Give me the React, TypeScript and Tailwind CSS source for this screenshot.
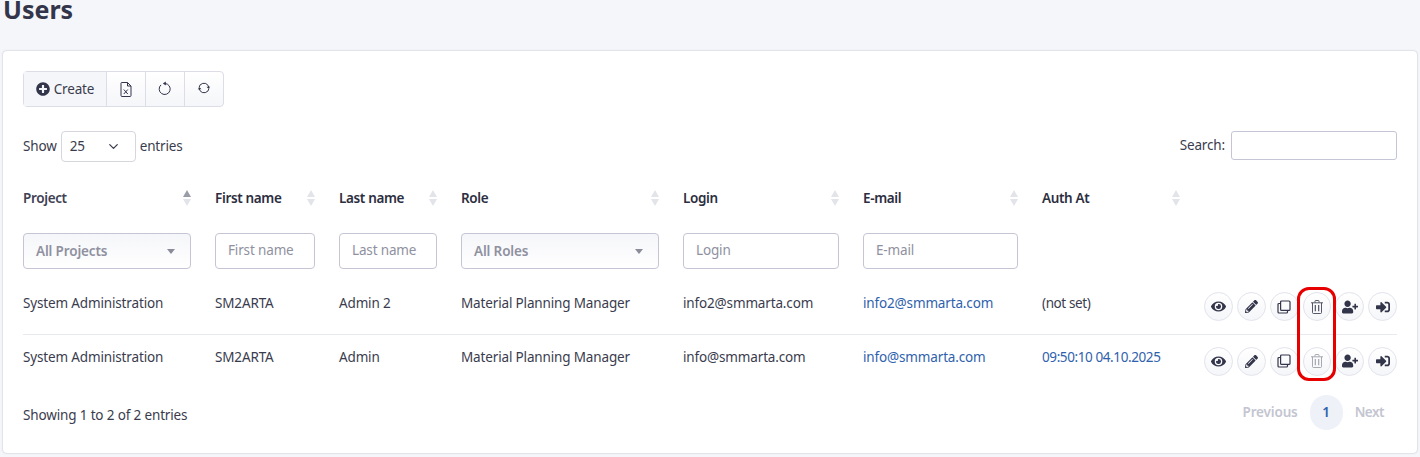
import { FaEye, FaPencilAlt, FaUserPlus, FaSignInAlt, FaPlusCircle } from "react-icons/fa";
import { ChevronDown } from "lucide-react";

interface Row {
  project: string;
  first: string;
  last: string;
  role: string;
  login: string;
  email: string;
  auth: string;
  authLink: boolean;
}

const rows: Row[] = [
  { project: "System Administration", first: "SM2ARTA", last: "Admin 2", role: "Material Planning Manager", login: "info2@smmarta.com", email: "info2@smmarta.com", auth: "(not set)", authLink: false },
  { project: "System Administration", first: "SM2ARTA", last: "Admin", role: "Material Planning Manager", login: "info@smmarta.com", email: "info@smmarta.com", auth: "09:50:10 04.10.2025", authLink: true },
];

function SortHead({ label, width, active }: { label: string; width: string; active?: boolean }) {
  return (
    <th className={`${width} h-[55px] p-0 pr-[23px] text-left align-middle font-semibold tracking-[-0.35px] ${active ? "text-[#3f4254]" : "text-[#2c2e40]"}`}>
      <div className="flex items-center justify-between pr-[1px]">
        <span className="pt-[2px]">{label}</span>
        <span className="flex flex-col gap-[2px]">
          <span className={`h-0 w-0 border-x-[4px] border-b-[7px] border-x-transparent ${active ? "border-b-[#9a9ca8]" : "border-b-[#e3e4e9]"}`} />
          <span className="h-0 w-0 border-x-[4px] border-t-[7px] border-x-transparent border-t-[#e3e4e9]" />
        </span>
      </div>
    </th>
  );
}

function FilterInput({ placeholder, width }: { placeholder: string; width: string }) {
  return (
    <input
      placeholder={placeholder}
      className={`${width} block h-[36px] rounded-[4px] border border-[#c5c5d6] bg-white px-3 pb-[3px] outline-none placeholder:text-[#8f91a0]`}
    />
  );
}

function FilterSelect({ label, width }: { label: string; width: string }) {
  return (
    <div className={`${width} flex h-[36px] items-center justify-between rounded-[4px] border border-[#c5c5d6] bg-gradient-to-b from-[#f5f6f9] to-white pl-3 pr-[15px] font-semibold text-[#8f91a0]`}>
      <span className="pt-[1px]">{label}</span>
      <span className="h-0 w-0 border-x-[4px] border-t-[5px] border-x-transparent border-t-[#8a8c99]" />
    </div>
  );
}

function ActionButton({ children }: { children: React.ReactNode }) {
  return (
    <button className="flex h-[29px] w-[29px] items-center justify-center rounded-full border border-[#e3e4ec] bg-gradient-to-b from-white to-[#f5f6f9] text-[14px] text-[#33354a]">
      {children}
    </button>
  );
}

function ExcelIcon() {
  return (
    <svg width="12" height="15" viewBox="0 0 12 15" fill="none" stroke="#33354a" strokeWidth="1">
      <path d="M1.500 .5h6l3.500 3.500v9.500a1 1 0 0 1-1 1h-8a1 1 0 0 1-1-1v-12.500a1 1 0 0 1 .5-.5z" />
      <path d="M7.500 .5v3.500h3.500" />
      <path d="M3.800 7.500l4 4.500M7.800 7.500l-4 4.500" />
    </svg>
  );
}

function UndoIcon() {
  return (
    <svg width="14" height="14" viewBox="0 0 14 14" fill="none" stroke="#33354a" strokeWidth="1">
      <path d="M3 3.900a5.500 5.500 0 1 0 4-1.400" />
      <path d="M4.800 2.500 7.800.4v4.200z" fill="#33354a" stroke="none" />
    </svg>
  );
}

function SyncIcon() {
  return (
    <svg width="14" height="14" viewBox="0 0 14 14" fill="none" stroke="#33354a" strokeWidth="1">
      <path d="M2 6.500a5 5 0 0 1 9-2.200l.8 1.700" />
      <path d="M12 7.500a5 5 0 0 1-9 2.200L2.200 8" />
      <path d="M9.500 5.700h3.800l-1.900 2zM.7 8.300h3.800l-1.900-2z" fill="#33354a" stroke="none" />
    </svg>
  );
}

function CopyIcon() {
  return (
    <svg width="14" height="14" viewBox="0 0 14 14" fill="none" stroke="#33354a" strokeWidth="1.200">
      <rect x="3.600" y="1" width="9.400" height="9.400" rx="1" />
      <path d="M3.600 3.500H2a1 1 0 0 0-1 1V12a1 1 0 0 0 1 1h7.500a1 1 0 0 0 1-1v-1.600" />
    </svg>
  );
}

function TrashIcon({ faded }: { faded: boolean }) {
  return (
    <svg width="12" height="14" viewBox="0 0 12 14" fill="none" stroke="#44465a" strokeWidth="0.900" className={faded ? "opacity-50" : ""}>
      <path d="M0 2.800h12M4 2.500V1.200a.7.7 0 0 1 .7-.7h2.600a.7.7 0 0 1 .7.7v1.300" />
      <path d="M1.500 2.800v9.700a1 1 0 0 0 1 1h7a1 1 0 0 0 1-1V2.800" />
      <path d="M4.300 5v6.200M7.700 5v6.200" strokeWidth="1.100" />
    </svg>
  );
}

export default function App() {
  return (
    <div className="min-h-[457px] overflow-hidden bg-[#f5f6f9] text-[13.5px] tracking-[-0.15px] text-[#3a3c4e]" style={{ fontFamily: '"Noto Sans", sans-serif' }}>
      <h1 className="h-[51px] pl-[3px] text-[25px] leading-[18px] font-bold tracking-normal text-[#33354a]">Users</h1>

      <div className="mx-[3px] h-[402px] rounded-[4px] bg-white px-[20px] pt-[20px] shadow-[0_0_2px_rgba(60,64,90,0.35)]">
        <div className="flex h-[36px] w-fit rounded-[4px] border border-[#dcdde6] bg-gradient-to-b from-white to-[#f5f6f9]">
          <button className="flex w-[83px] items-center justify-center gap-[4px] border-r border-[#dcdde6] bg-[#f5f6f9]">
            <FaPlusCircle className="text-[14px] text-[#33354a]" />
            <span>Create</span>
          </button>
          <button className="flex w-[39px] items-center justify-center border-r border-[#dcdde6]">
            <ExcelIcon />
          </button>
          <button className="flex w-[39px] items-center justify-center border-r border-[#dcdde6] pb-[2px]">
            <UndoIcon />
          </button>
          <button className="flex w-[38px] items-center justify-center pb-[2px]">
            <SyncIcon />
          </button>
        </div>

        <div className="mt-[24px] flex h-[31px] items-start justify-between">
          <div className="flex items-center gap-[4px]">
            <span>Show</span>
            <div className="flex h-[31px] w-[75px] items-center justify-between rounded-[4px] border border-[#d5d6de] pl-[8px] pr-[14px]">
              <span>25</span>
              <ChevronDown size={15} strokeWidth={2} />
            </div>
            <span>entries</span>
          </div>
          <div className="flex items-center gap-[6px]">
            <span>Search:</span>
            <div className="h-[29px] w-[166px] rounded-[3px] border border-[#c5c5d6] bg-white" />
          </div>
        </div>

        <div className="relative mt-[8px]">
          <table className="w-full table-fixed border-collapse">
            <thead>
              <tr>
                <SortHead label="Project" width="w-[192px]" active />
                <SortHead label="First name" width="w-[124px]" />
                <SortHead label="Last name" width="w-[122px]" />
                <SortHead label="Role" width="w-[222px]" />
                <SortHead label="Login" width="w-[180px]" />
                <SortHead label="E-mail" width="w-[179px]" />
                <SortHead label="Auth At" width="w-[162px]" />
                <th className="p-0" />
              </tr>
              <tr>
                <td className="h-[55px] p-0 align-top pt-[8px]"><FilterSelect label="All Projects" width="w-[168px]" /></td>
                <td className="p-0 align-top pt-[8px]"><FilterInput placeholder="First name" width="w-[100px]" /></td>
                <td className="p-0 align-top pt-[8px]"><FilterInput placeholder="Last name" width="w-[98px]" /></td>
                <td className="p-0 align-top pt-[8px]"><FilterSelect label="All Roles" width="w-[198px]" /></td>
                <td className="p-0 align-top pt-[8px]"><FilterInput placeholder="Login" width="w-[156px]" /></td>
                <td className="p-0 align-top pt-[8px]"><FilterInput placeholder="E-mail" width="w-[155px]" /></td>
                <td className="p-0" />
                <td className="p-0" />
              </tr>
            </thead>
            <tbody>
              {rows.map((r, i) => (
                <tr key={i} className={i === 0 ? "border-b border-[#e9eaf0]" : ""}>
                  <td className="h-[54px] p-0 pb-[8px]">{r.project}</td>
                  <td className="p-0 pb-[8px]">{r.first}</td>
                  <td className="p-0 pb-[8px]">{r.last}</td>
                  <td className="p-0 pb-[8px]">{r.role}</td>
                  <td className="p-0 pb-[8px]">{r.login}</td>
                  <td className="p-0 pb-[8px] text-[#2f62ad]">{r.email}</td>
                  <td className={`p-0 pb-[8px] tracking-[-0.4px] ${r.authLink ? "text-[#2f62ad]" : ""}`}>{r.auth}</td>
                  <td className="p-0">
                    <div className="flex justify-end gap-[4px]">
                      <ActionButton><FaEye className="text-[15px]" /></ActionButton>
                      <ActionButton><FaPencilAlt className="text-[13px]" /></ActionButton>
                      <ActionButton><CopyIcon /></ActionButton>
                      <ActionButton><TrashIcon faded={i === 1} /></ActionButton>
                      <ActionButton><FaUserPlus className="text-[16px]" /></ActionButton>
                      <ActionButton><FaSignInAlt /></ActionButton>
                    </div>
                  </td>
                </tr>
              ))}
            </tbody>
          </table>
          <div className="pointer-events-none absolute left-[1274px] top-[117px] h-[94px] w-[39px] rounded-[12px] border-[3px] border-[#e60000]" />
        </div>

        <div className="mt-[7px] flex items-start justify-between">
          <span className="pt-[10px]">Showing 1 to 2 of 2 entries</span>
          <div className="flex items-center font-semibold text-[#c3c5d0]">
            <span className="px-[12px]">Previous</span>
            <span className="flex h-[35px] w-[33px] items-center justify-center rounded-full bg-[#eef1f8] text-[#2f62ad]">1</span>
            <span className="pl-[12px] pr-[13px] tracking-[-0.5px]">Next</span>
          </div>
        </div>
      </div>
    </div>
  );
}
